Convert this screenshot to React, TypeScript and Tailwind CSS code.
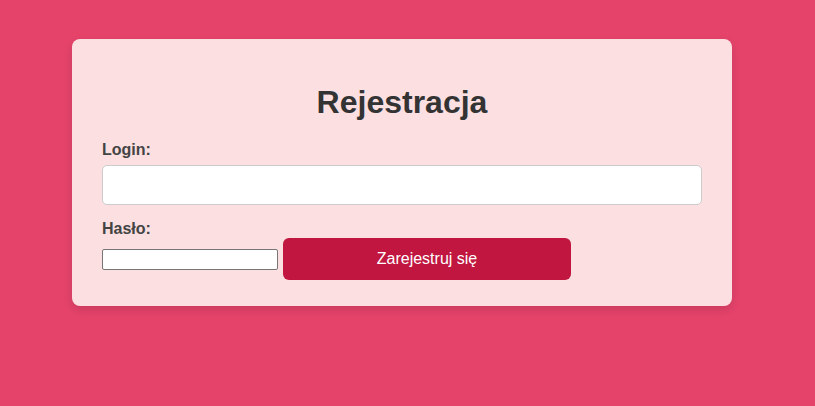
export default function App() {
  return (
    <div
      className="min-h-[406px] w-full bg-[#e5436a] pt-[39px] pl-[72px]"
      style={{ fontFamily: '"Liberation Sans", Arial, sans-serif' }}
    >
      <div className="w-[660px] rounded-[8px] bg-[#fbdfe1] px-[30px] pt-[45px] pb-[26px] shadow-[0_4px_10px_rgba(0,0,0,0.12)]">
        <h2 className="text-center text-[32px] font-bold leading-[37px] text-[#333]">Rejestracja</h2>
        <label className="mt-[20px] block text-[16px] font-bold leading-[18px] text-[#444]">Login:</label>
        <input
          type="text"
          className="mt-[6px] block h-[40px] w-full rounded-[5px] border border-[#ccc] bg-white px-2 outline-none"
        />
        <label className="mt-[15px] block text-[16px] font-bold leading-[18px] text-[#444]">Hasło:</label>
        <div className="flex items-center gap-[5px]">
          <input
            type="password"
            className="h-[21px] w-[176px] rounded-[2px] border border-[#767676] bg-white outline-none"
          />
          <button className="h-[42px] w-[288px] rounded-[6px] bg-[#c0163f] text-[16px] text-white">
            Zarejestruj się
          </button>
        </div>
      </div>
    </div>
  );
}
